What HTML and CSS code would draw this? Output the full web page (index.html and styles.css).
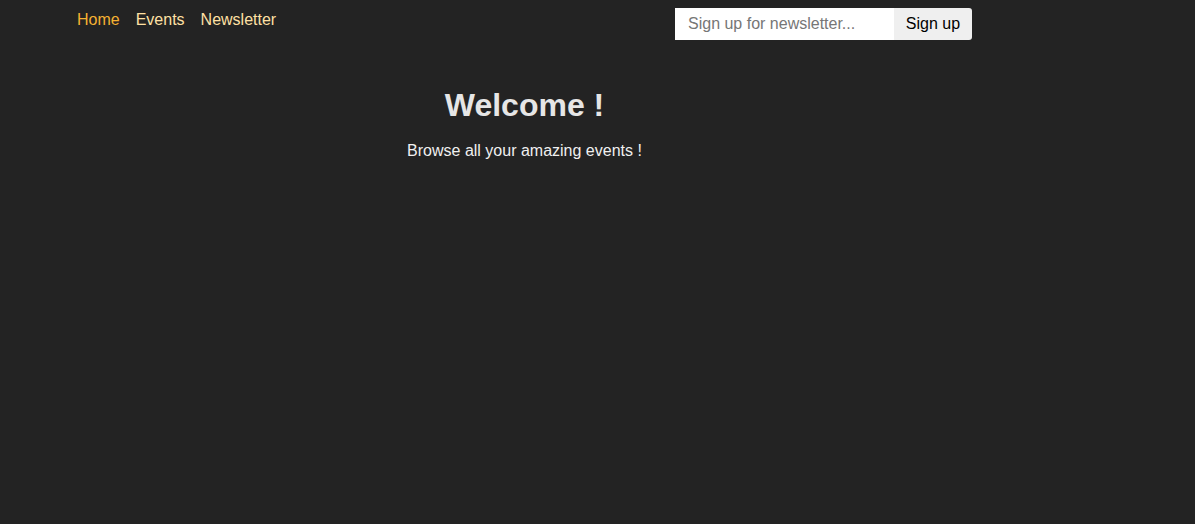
FILE: index.html
```html
<!DOCTYPE html>
<html>
<head>
<meta charset="utf-8">
<link rel="stylesheet" href="styles.css">
</head>
<body>
<div class="container">
  <header class="topbar">
    <nav class="nav">
      <a class="nav-link active" href="#">Home</a>
      <a class="nav-link" href="#">Events</a>
      <a class="nav-link" href="#">Newsletter</a>
    </nav>
    <form class="signup">
      <input class="signup-input" type="text" placeholder="Sign up for newsletter...">
      <button class="signup-btn" type="button">Sign up</button>
    </form>
  </header>
  <main class="hero">
    <h1 class="hero-title">Welcome !</h1>
    <p class="hero-text">Browse all your amazing events !</p>
  </main>
</div>
</body>
</html>
```

FILE: styles.css
```css
html, body {
  margin: 0;
  padding: 0;
  background: #232323;
  height: 100%;
}
body {
  font-family: "Liberation Sans", Arial, sans-serif;
  font-size: 16px;
  color: #e6e6e6;
}
.container {
  width: 895px;
  margin-left: 77px;
}
.topbar {
  display: flex;
  justify-content: space-between;
  align-items: flex-start;
  padding-top: 8px;
}
.nav {
  display: flex;
  gap: 16px;
  padding-top: 3px;
}
.nav-link {
  color: #ffe0a3;
  text-decoration: none;
  font-size: 16px;
  line-height: 18px;
}
.nav-link.active {
  color: #f5b132;
}
.signup {
  display: flex;
  margin: 0;
}
.signup-input {
  width: 219px;
  height: 32px;
  box-sizing: border-box;
  border: none;
  outline: none;
  background: #fff;
  padding: 0 13px;
  font-family: "Liberation Sans", Arial, sans-serif;
  font-size: 16px;
  color: #333;
  border-radius: 0;
}
.signup-input::placeholder {
  color: #767676;
}
.signup-btn {
  width: 78px;
  height: 32px;
  border: none;
  background: #efefef;
  color: #000;
  font-family: "Liberation Sans", Arial, sans-serif;
  font-size: 16px;
  border-radius: 0 3px 3px 0;
  padding: 0;
  cursor: pointer;
}
.hero {
  text-align: center;
  padding-top: 47px;
}
.hero-title {
  margin: 0;
  font-size: 32px;
  line-height: 37px;
  font-weight: bold;
  color: #e6e6e6;
}
.hero-text {
  margin: 18px 0 0;
  font-size: 16px;
  line-height: 18px;
  color: #f0f0f0;
}
```
